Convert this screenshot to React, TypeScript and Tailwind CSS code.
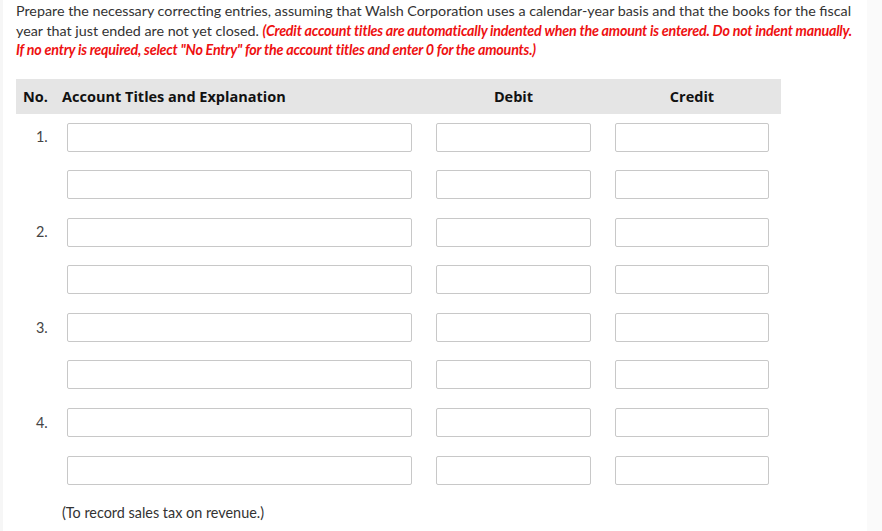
const rows = [
  { no: '1.' }, { no: '' },
  { no: '2.' }, { no: '' },
  { no: '3.' }, { no: '' },
  { no: '4.' }, { no: '' },
];

export default function App() {
  return (
    <div className="flex w-[882px] h-[531px] bg-white overflow-hidden font-['Lato',sans-serif] text-[#333]">
      {/* left edge strip */}
      <div className="w-[3px] bg-[#f6f6f6]" />
      <div className="flex-1 pl-[13px] pt-[1px]">
        <p className="text-[14.3px] leading-[19.5px] whitespace-nowrap">
          Prepare the necessary correcting entries, assuming that Walsh Corporation uses a calendar-year basis and that the books for the fiscal
          <br />
          year that just ended are not yet closed.{' '}
          <span className="text-[#ee1111] font-bold italic tracking-[-0.22px]">
            (Credit account titles are automatically indented when the amount is entered. Do not indent manually.
            <br />
            If no entry is required, select "No Entry" for the account titles and enter 0 for the amounts.)
          </span>
        </p>

        {/* table */}
        <div className="w-[765px] mt-[19px]">
          <div className="flex items-center h-[35px] pt-[2px] bg-[#e5e5e5] font-['Open_Sans',Arial,sans-serif] font-bold text-[14.5px] text-[#111]">
            <div className="w-[46px] pl-[7px]">No.</div>
            <div className="w-[374px]">Account Titles and Explanation</div>
            <div className="w-[155px] text-center">Debit</div>
            <div className="w-[24px]" />
            <div className="w-[154px] text-center">Credit</div>
          </div>

          <div className="flex flex-col gap-[18.6px] pt-[9px]">
            {rows.map((r, i) => (
              <div key={i} className="flex items-center h-[29px]">
                <div className="w-[51px] pl-[20px] text-[14.4px] text-[#444]">{r.no}</div>
                <input className="w-[345px] h-[29px] border border-[#c8c8c8] rounded-[2px] bg-white" />
                <div className="w-[24px]" />
                <input className="w-[155px] h-[29px] border border-[#c8c8c8] rounded-[2px] bg-white" />
                <div className="w-[24px]" />
                <input className="w-[154px] h-[29px] border border-[#c8c8c8] rounded-[2px] bg-white" />
              </div>
            ))}
          </div>

          <div className="pl-[46px] mt-[17px] text-[14.4px] text-[#333]">(To record sales tax on revenue.)</div>
        </div>
      </div>
      {/* right edge strip */}
      <div className="w-[15px] bg-[#fafafa]" />
    </div>
  );
}
